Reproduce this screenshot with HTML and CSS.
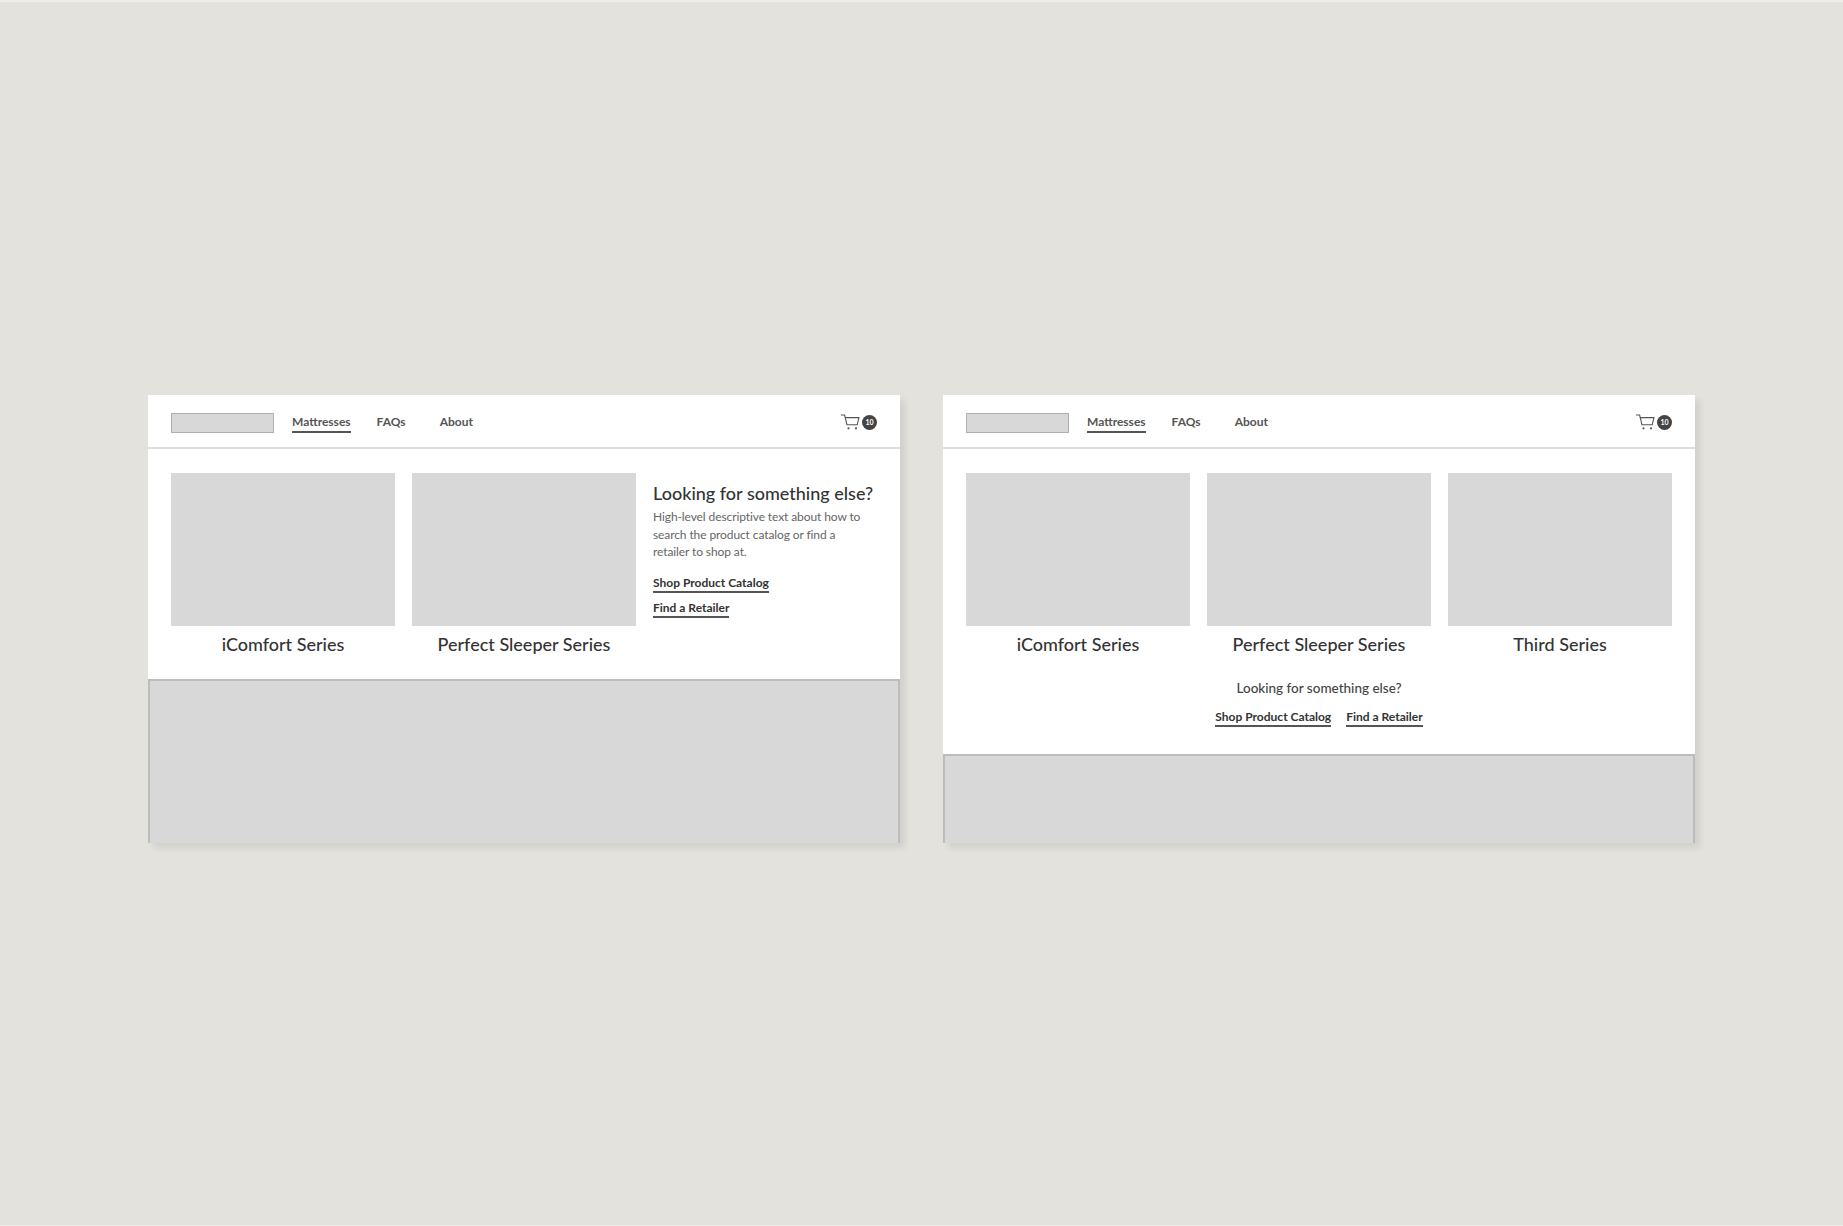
FILE: index.html
```html
<!DOCTYPE html>
<html lang="en">
<head>
  <meta charset="UTF-8" />
  <title>Navigation menu wireframes</title>
  <link rel="stylesheet" href="styles.css">
</head>
<body>

<main class="board">
  <!-- Option A: text column beside two series -->
  <section class="frame">
    <div class="navbar">
      <div class="logo"></div>
      <nav class="nav-links">
        <a href="#" class="active">Mattresses</a>
        <a href="#" class="faqs">FAQs</a>
        <a href="#">About</a>
      </nav>
      <a href="#" class="cart">
        <svg class="cart-icon" viewBox="0 0 19 16" width="19" height="16" fill="none" stroke="#555" stroke-width="1.1">
          <path d="M0 1h3.6l2.4 9.8h10.2L18 3.6H4.2"/>
          <circle cx="7.5" cy="14.3" r="1.1" fill="#555" stroke="none"/>
          <circle cx="15" cy="14.3" r="1.1" fill="#555" stroke="none"/>
        </svg>
        <span class="badge">10</span>
      </a>
    </div>
    <div class="series-row">
      <div class="series">
        <div class="thumb"></div>
        <h3>iComfort Series</h3>
      </div>
      <div class="series">
        <div class="thumb"></div>
        <h3>Perfect Sleeper Series</h3>
      </div>
      <div class="else-box">
        <h2>Looking for something else?</h2>
        <p>High-level descriptive text about how to search the product catalog or find a retailer to shop at.</p>
        <a href="#" class="text-link">Shop Product Catalog</a>
        <a href="#" class="text-link">Find a Retailer</a>
      </div>
    </div>
    <div class="hero"></div>
  </section>

  <!-- Option B: three series, links below -->
  <section class="frame">
    <div class="navbar">
      <div class="logo"></div>
      <nav class="nav-links">
        <a href="#" class="active">Mattresses</a>
        <a href="#" class="faqs">FAQs</a>
        <a href="#">About</a>
      </nav>
      <a href="#" class="cart">
        <svg class="cart-icon" viewBox="0 0 19 16" width="19" height="16" fill="none" stroke="#555" stroke-width="1.1">
          <path d="M0 1h3.6l2.4 9.8h10.2L18 3.6H4.2"/>
          <circle cx="7.5" cy="14.3" r="1.1" fill="#555" stroke="none"/>
          <circle cx="15" cy="14.3" r="1.1" fill="#555" stroke="none"/>
        </svg>
        <span class="badge">10</span>
      </a>
    </div>
    <div class="series-row">
      <div class="series">
        <div class="thumb"></div>
        <h3>iComfort Series</h3>
      </div>
      <div class="series">
        <div class="thumb"></div>
        <h3>Perfect Sleeper Series</h3>
      </div>
      <div class="series">
        <div class="thumb"></div>
        <h3>Third Series</h3>
      </div>
    </div>
    <div class="else-bar">
      <h4>Looking for something else?</h4>
      <div class="else-links">
        <a href="#" class="text-link">Shop Product Catalog</a>
        <a href="#" class="text-link">Find a Retailer</a>
      </div>
    </div>
    <div class="hero"></div>
  </section>
</main>

</body>
</html>
```

FILE: styles.css
```css
* { margin: 0; padding: 0; box-sizing: border-box; }

body {
  font-family: 'Lato', sans-serif;
  background: #e3e2dd;
  border-top: 2px solid #eeede9;
  border-bottom: 1px solid #eeede9;
  height: 1226px;
  overflow: hidden;
}

a {
  text-decoration: none;
  color: inherit;
}

.board {
  display: flex;
  gap: 43px;
  padding: 393px 0 0 148px;
}

.frame {
  width: 752px;
  height: 448px;
  background: #fff;
  display: flex;
  flex-direction: column;
  box-shadow: 5px 5px 6px rgba(0,0,0,0.08);
}

.navbar {
  height: 54px;
  padding: 3px 23px 0;
  border-bottom: 2px solid #dedede;
  display: flex;
  align-items: center;
}

.logo {
  width: 103px;
  height: 20px;
  background: #d8d8d8;
  border: 1px solid #b0b0b0;
}

.nav-links {
  display: flex;
  margin-left: 18px;
  color: #555;
  font-size: 12px;
  font-weight: 700;
}

.nav-links a {
  margin-right: 34px;
  padding: 1px 0 2px;
  border-bottom: 2px solid transparent;
}

.nav-links a.active {
  border-bottom-color: #555;
  margin-right: 26px;
}

.cart {
  margin-left: auto;
  display: flex;
  align-items: center;
  gap: 2px;
}

.cart-icon {
  margin-top: -2px;
}

.badge {
  width: 15px;
  height: 15px;
  border-radius: 50%;
  background: #444;
  color: #fff;
  font-size: 7px;
  font-weight: 700;
  line-height: 15px;
  text-align: center;
}

.series-row {
  display: grid;
  grid-template-columns: repeat(3, 224px);
  gap: 17px;
  height: 230px;
  padding: 24px 23px 0;
}

.thumb {
  height: 153px;
  background: #d8d8d8;
}

.series h3 {
  margin-top: 7px;
  font-size: 18px;
  line-height: 22px;
  font-weight: 500;
  color: #333;
  text-align: center;
}

.else-box h2 {
  margin-top: 9px;
  font-size: 18px;
  line-height: 22px;
  font-weight: 500;
  color: #333;
}

.else-box p {
  max-width: 215px;
  margin: 4px 0 14px;
  font-size: 12px;
  letter-spacing: -0.1px;
  line-height: 17.7px;
  color: #666;
}

.text-link {
  display: table;
  font-size: 12px;
  font-weight: 700;
  line-height: 15px;
  color: #333;
  padding-bottom: 1px;
  border-bottom: 2px solid #555;
  margin-bottom: 7px;
}

.else-bar {
  height: 75px;
  text-align: center;
}

.else-bar h4 {
  font-size: 13.5px;
  font-weight: 500;
  line-height: 18px;
  color: #444;
}

.else-links {
  display: flex;
  justify-content: center;
  gap: 15px;
  margin-top: 12px;
}

.else-links .text-link {
  margin-bottom: 0;
}

.hero {
  flex: 1;
  background: #d8d8d8;
  border: 2px solid #bcbcbc;
  border-bottom: none;
}
```
